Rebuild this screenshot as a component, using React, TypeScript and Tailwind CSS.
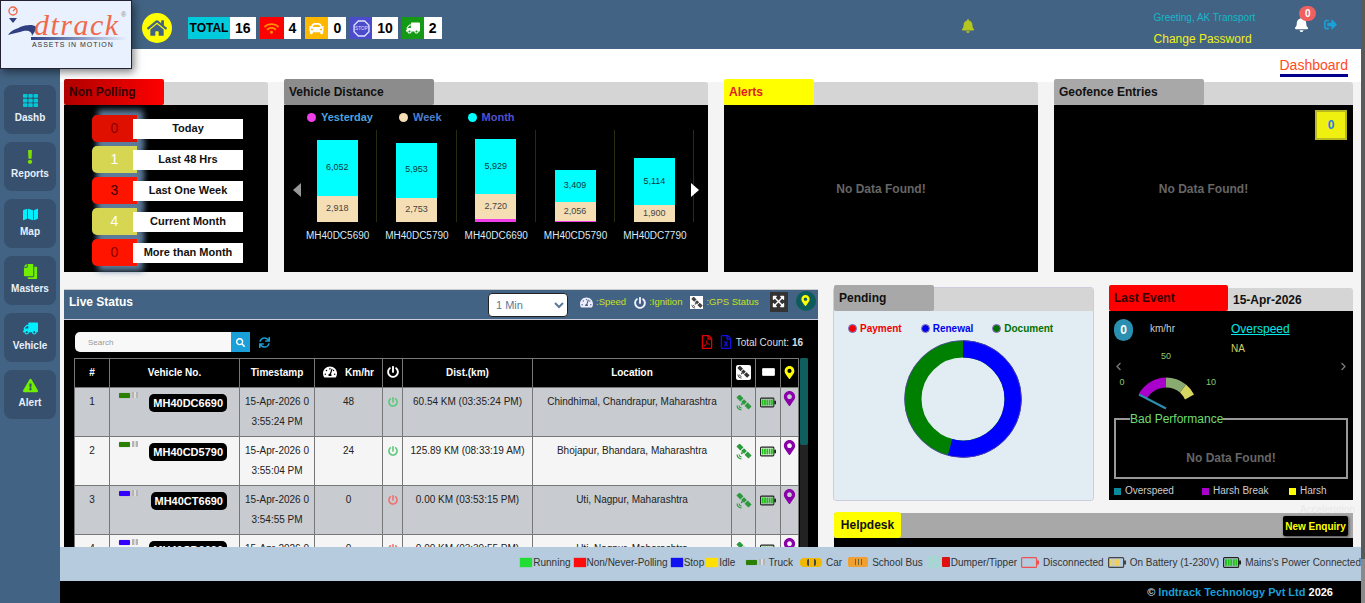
import type { ReactNode } from "react";
import {
  FaBell,
  FaCar,
  FaChevronLeft,
  FaChevronRight,
  FaCopy,
  FaExclamation,
  FaExclamationTriangle,
  FaExpandArrowsAlt,
  FaHome,
  FaMap,
  FaMapMarkerAlt,
  FaPowerOff,
  FaRegFileExcel,
  FaRegFilePdf,
  FaSearch,
  FaSignOutAlt,
  FaSync,
  FaTachometerAlt,
  FaTh,
  FaTruck,
  FaWifi,
} from "react-icons/fa";

const navItems = [
  { label: "Dashb", icon: <FaTh size={15} className="text-[#00c8d8]" /> },
  { label: "Reports", icon: <FaExclamation size={14} className="text-[#7fe000]" /> },
  { label: "Map", icon: <FaMap size={15} className="text-[#00f0ff]" /> },
  { label: "Masters", icon: <FaCopy size={15} className="text-[#70f000] -scale-x-100" /> },
  { label: "Vehicle", icon: <FaTruck size={15} className="text-[#00f0ff] -scale-x-100" /> },
  { label: "Alert", icon: <FaExclamationTriangle size={15} className="text-[#70f000]" /> },
];

const nonPolling = [
  { value: "0", label: "Today", pill: "bg-[#e01000] text-[#8a0000]" },
  { value: "1", label: "Last 48 Hrs", pill: "bg-[#d6d653] text-white" },
  { value: "3", label: "Last One Week", pill: "bg-[#ff1400] text-[#400000]" },
  { value: "4", label: "Current Month", pill: "bg-[#d6d653] text-white" },
  { value: "0", label: "More than Month", pill: "bg-[#ff1400] text-[#8a0000]" },
];

const bars = [
  { name: "MH40DC5690", month: "6,052", week: "2,918", mh: 56, wh: 26, yh: 0 },
  { name: "MH40DC5790", month: "5,953", week: "2,753", mh: 55, wh: 24.5, yh: 0 },
  { name: "MH40DC6690", month: "5,929", week: "2,720", mh: 55, wh: 25, yh: 3 },
  { name: "MH40CD5790", month: "3,409", week: "2,056", mh: 32, wh: 18.5, yh: 1.5 },
  { name: "MH40DC7790", month: "5,114", week: "1,900", mh: 47, wh: 17, yh: 0 },
];

const rows = [
  { no: 1, plate: "MH40DC6690", time: "3:55:24 PM", speed: "48", on: true, dist: "60.54 KM (03:35:24 PM)", loc: "Chindhimal, Chandrapur, Maharashtra", truck: "bg-[#2a8000]" },
  { no: 2, plate: "MH40CD5790", time: "3:55:04 PM", speed: "24", on: true, dist: "125.89 KM (08:33:19 AM)", loc: "Bhojapur, Bhandara, Maharashtra", truck: "bg-[#2a8000]" },
  { no: 3, plate: "MH40CT6690", time: "3:54:55 PM", speed: "0", on: false, dist: "0.00 KM (03:53:15 PM)", loc: "Uti, Nagpur, Maharashtra", truck: "bg-[#3300ff]" },
  { no: 4, plate: "MH40CD6690", time: "3:54:40 PM", speed: "0", on: false, dist: "0.00 KM (03:39:55 PM)", loc: "Uti, Nagpur, Maharashtra", truck: "bg-[#3300ff]" },
];

function SatelliteIcon({ size, color }: { size: number; color: string }) {
  return (
    <svg width={size} height={size} viewBox="0 0 16 16" className="mx-auto block">
      <g transform="rotate(45 8 7)" fill={color}>
        <rect x="-0.5" y="4.8" width="5.5" height="4.4" />
        <rect x="6" y="5" width="4" height="4" />
        <rect x="11" y="4.8" width="5.5" height="4.4" />
        <rect x="7.2" y="9" width="1.6" height="2" />
      </g>
      <path d="M1 10.5 A5 5 0 0 0 5.5 15 M3 10.5 A3 3 0 0 0 5.5 13" fill="none" stroke={color} strokeWidth="1.1" />
    </svg>
  );
}

function Counter({ box, value, children }: { box: string; value: string; children: ReactNode }) {
  return (
    <div className="flex h-[22px] items-stretch">
      <div className={`flex items-center justify-center ${box}`}>{children}</div>
      <div className="flex items-center justify-center bg-white px-[5px] text-[14px] font-bold text-black">{value}</div>
    </div>
  );
}

function Card({
  title,
  tabWidth,
  tabClass,
  extra,
  className,
  children,
}: {
  title: string;
  tabWidth: string;
  tabClass: string;
  extra?: ReactNode;
  className?: string;
  children: ReactNode;
}) {
  return (
    <div className={`flex flex-col rounded-[3px] ${className}`}>
      <div className="flex h-[23px] shrink-0 rounded-t-[3px] bg-[#d5d5d5]">
        <div className={`-mt-[3px] flex h-[26px] items-center rounded-[2px] pl-[5px] text-[12px] font-bold ${tabWidth} ${tabClass}`}>
          {title}
        </div>
        {extra}
      </div>
      {children}
    </div>
  );
}

function NoData() {
  return <div className="text-[12px] font-bold text-[#666]">No Data Found!</div>;
}

function MiniTruck({ color }: { color: string }) {
  return (
    <div className="flex items-center gap-[2px]">
      <div className={`h-[5px] w-[11px] rounded-[1px] shadow-[0_0_1px_#888] ${color}`} />
      <div className="h-[6px] w-[6px] border-x-2 border-[#b4b4b4] bg-[#dcdcdc]" />
    </div>
  );
}

function BatteryIcon({ stroke, fill, bars: n, w = 18 }: { stroke: string; fill: string; bars: number; w?: number }) {
  return (
    <svg width={w} height="11" viewBox="0 0 18 11">
      <rect x="0.6" y="0.6" width="15" height="9.8" rx="1" fill="none" stroke={stroke} strokeWidth="1.2" />
      <rect x="16" y="3.5" width="2" height="4" fill={stroke} />
      {Array.from({ length: n }).map((_, i) => (
        <rect key={i} x={2 + i * 2.6} y="2.2" width="2" height="6.6" fill={fill} />
      ))}
    </svg>
  );
}

function LiveTable() {
  const th = "border border-[#777] pb-[2px] text-[10px] font-bold text-white";
  const td = "border border-[#777] align-top text-[10px] leading-[20px] text-[#222] pt-[4px]";
  return (
    <table className="w-[724px] table-fixed border-collapse text-center">
      <colgroup>
        <col className="w-[35px]" />
        <col className="w-[130px]" />
        <col className="w-[75px]" />
        <col className="w-[68px]" />
        <col className="w-[20px]" />
        <col className="w-[130px]" />
        <col className="w-[199px]" />
        <col className="w-[24px]" />
        <col className="w-[25px]" />
        <col className="w-[18px]" />
      </colgroup>
      <thead>
        <tr className="h-[29px] bg-black">
          <th className={th}>#</th>
          <th className={th}>Vehicle No.</th>
          <th className={th}>Timestamp</th>
          <th className={th}>
            <span className="flex items-center justify-center gap-[8px]">
              <FaTachometerAlt size={14} />
              Km/hr
            </span>
          </th>
          <th className={th}>
            <FaPowerOff size={12} className="mx-auto" />
          </th>
          <th className={th}>Dist.(km)</th>
          <th className={th}>Location</th>
          <th className={th}>
            <span className="mx-auto flex h-[15px] w-[15px] items-center justify-center rounded-[2px] bg-white">
              <SatelliteIcon size={13} color="#333" />
            </span>
          </th>
          <th className={th}>
            <span className="mx-auto block h-[8px] w-[13px] rounded-[1px] border-[1.5px] border-[#ddd] bg-white" />
          </th>
          <th className={th}>
            <FaMapMarkerAlt size={13} className="mx-auto text-[#ffff00]" />
          </th>
        </tr>
      </thead>
      <tbody>
        {rows.map((r) => (
          <tr key={r.no} className={`h-[49px] ${r.no % 2 ? "bg-[#c8cbd0]" : "bg-[#f5f5f5]"}`}>
            <td className={td}>{r.no}</td>
            <td className={td}>
              <div className="flex items-start justify-between pl-[9px] pr-[12px]">
                <MiniTruck color={r.truck} />
                <span className="mt-[2px] rounded-[5px] bg-black px-[4px] text-[11px] font-bold leading-[18px] text-white">
                  {r.plate}
                </span>
              </div>
            </td>
            <td className={td}>
              15-Apr-2026 0
              <br />
              {r.time}
            </td>
            <td className={td}>{r.speed}</td>
            <td className={td}>
              <FaPowerOff size={10} className={`mx-auto mt-[5px] ${r.on ? "text-[#5cc87a]" : "text-[#f07070]"}`} />
            </td>
            <td className={td}>{r.dist}</td>
            <td className={td}>{r.loc}</td>
            <td className={td}>
              <div className="mt-[3px]">
                <SatelliteIcon size={16} color="#2a9a3c" />
              </div>
            </td>
            <td className={td}>
              <div className="mt-[5px] flex justify-center">
                <BatteryIcon stroke="#222" fill="#22c01a" bars={5} w={16} />
              </div>
            </td>
            <td className={td}>
              <FaMapMarkerAlt size={15} className="mx-auto -mt-[1px] text-[#8a00a8]" />
            </td>
          </tr>
        ))}
      </tbody>
    </table>
  );
}

export default function App() {
  return (
    <div className="flex h-[603px] w-[1365px] overflow-hidden font-['Liberation_Sans',Arial,sans-serif]">
      <div className="relative flex w-[1361px] flex-col">
        {/* logo sits over the header and sidebar */}
        <div className="absolute left-0 top-0 z-20 h-[69px] w-[132px] border border-[#223] bg-[#e8f1fd] shadow-[2px_3px_8px_rgba(0,0,0,0.5)]">
          <svg width="36" height="38" viewBox="0 0 36 38" className="absolute left-[5px] top-[4px]">
            <circle cx="7" cy="6" r="4" fill="none" stroke="#f0694a" strokeWidth="1.4" />
            <path d="M7 6 l3 -3" stroke="#f0694a" strokeWidth="1.2" />
            <path d="M3 13 h8 l-4 5 z" fill="#2f3f80" />
            <path d="M2 30 C6 24 12 24 14 22 C20 20 27 19 30 22 C30 26 27 29 26 31 C26 25 20 25 14 27 C10 28 5 29 2 30 Z" fill="#2f3f80" />
          </svg>
          <span className="absolute left-[33px] top-[8px] font-['Liberation_Serif',serif] text-[30px] italic leading-[32px] tracking-[1.5px] text-[#f0694a]">
            dtrack
          </span>
          <span className="absolute left-[120px] top-[10px] text-[7px] leading-[8px] text-[#888]">®</span>
          <div className="absolute left-[30px] top-[36px] h-[3px] w-[96px] bg-gradient-to-r from-[#2f3f80] to-[#e8f1fd]" />
          <span className="absolute left-[31px] top-[40px] whitespace-nowrap text-[7px] leading-[8px] tracking-[0.95px] text-[#333]">
            ASSETS IN MOTION
          </span>
        </div>

        <header className="flex h-[49px] shrink-0 items-center bg-[#426383] pl-[142px]">
          <div className="mt-[7px] flex h-[30px] w-[30px] items-center justify-center rounded-full bg-[#ffff00]">
            <FaHome size={20} className="text-[#426383]" />
          </div>
          <div className="mt-[7px] ml-[16px] flex items-center gap-[4px]">
            <Counter box="w-[42px] bg-[#00cbdc] text-[12px] font-bold text-black" value="16">
              TOTAL
            </Counter>
            <Counter box="w-[24px] bg-[#ff0000]" value="4">
              <FaWifi size={15} className="text-[#ff9000]" />
            </Counter>
            <Counter box="w-[23px] bg-[#ffb800]" value="0">
              <FaCar size={15} className="text-white" />
            </Counter>
            <Counter box="w-[22px] bg-[#4a4ccc]" value="10">
              <svg width="17" height="17" viewBox="0 0 16 16">
                <polygon points="5,1 11,1 15,5 15,11 11,15 5,15 1,11 1,5" fill="none" stroke="#dfe0ff" strokeWidth="1.3" />
                <text x="8" y="9.5" fontSize="4.5" fill="#dfe0ff" textAnchor="middle">STOP</text>
              </svg>
            </Counter>
            <Counter box="w-[22px] bg-[#159a15]" value="2">
              <FaTruck size={14} className="text-white -scale-x-100" />
            </Counter>
          </div>
          <div className="mt-[2px] ml-[519px] text-[#b5c61e]">
            <FaBell size={14} />
          </div>
          <div className="ml-[179px] flex flex-col pt-[8px]">
            <span className="text-[10px] leading-[14px] text-[#14b8c8]">Greeting, AK Transport</span>
            <span className="mt-[7px] text-[12px] leading-[14px] text-[#f0f020]">Change Password</span>
          </div>
          <div className="relative ml-[39px] text-white">
            <FaBell size={15} />
            <span className="absolute -right-[7px] -top-[11px] flex h-[15px] w-[17px] items-center justify-center rounded-full bg-[#f06060] text-[10px] font-bold text-white">
              0
            </span>
          </div>
          <FaSignOutAlt size={13} className="ml-[15px] text-[#1a9fd8]" />
        </header>

        <div className="flex min-h-0 flex-1">
          <aside className="flex w-[60px] shrink-0 flex-col gap-[8px] bg-[#426383] px-[4px] pt-[36px]">
            {navItems.map((n) => (
              <div
                key={n.label}
                className="flex h-[49px] flex-col items-center justify-center gap-[2px] rounded-lg bg-[#36506e] pb-[2px] text-[10px] font-bold text-[#e8f0fa]"
              >
                {n.icon}
                {n.label}
              </div>
            ))}
          </aside>

          <div className="flex min-w-0 flex-1 flex-col">
            <main className="relative min-h-0 flex-1 overflow-hidden bg-[#f4f4f4] pl-[4px] pr-[8px]">
              <div className="-ml-[4px] -mr-[8px] flex h-[33px] justify-end bg-white pr-[13px]">
                <span className="h-[28px] border-b-[3px] border-[#00008b] pt-[8px] text-[14px] leading-[16px] text-[#ff4a1c]">
                  Dashboard
                </span>
              </div>

              <div className="flex h-[190px] gap-4">
                <Card title="Non Polling" tabWidth="w-[100px]" tabClass="bg-gradient-to-r from-[#b00000] to-[#ff0000] text-[#300]" className="w-[204px]">
                  <div className="isolate flex flex-1 flex-col gap-[4px] bg-black pl-[28px] pt-[10px]">
                    {nonPolling.map((p, i) => (
                      <div key={i} className="flex h-[27px] items-center">
                        <div className={`relative flex h-[27px] w-[45px] items-center justify-center rounded-l-[5px] text-[14px] ${p.pill}`}>
                          <span className="absolute -bottom-[5px] -right-[6px] -top-[5px] left-[6px] -z-10 bg-[#5f7f9f] blur-[3px]" />
                          {p.value}
                        </div>
                        <div className="relative -ml-[4px] flex h-[20px] w-[110px] items-center justify-center bg-white text-[11px] font-bold text-[#111]">
                          {p.label}
                        </div>
                      </div>
                    ))}
                  </div>
                </Card>

                <Card title="Vehicle Distance" tabWidth="w-[150px]" tabClass="bg-[#8c8c8c] text-[#111]" className="w-[424px]">
                  <div className="relative flex flex-1 flex-col bg-black">
                    <div className="mb-px flex h-[24px] items-center pl-[23px] text-[11px] font-bold">
                      <span className="mr-[5px] h-[9px] w-[9px] rounded-full bg-[#f03ee8]" />
                      <span className="mr-[26px] text-[#4aa3df]">Yesterday</span>
                      <span className="mr-[5px] h-[9px] w-[9px] rounded-full bg-[#f5deb3]" />
                      <span className="mr-[26px] text-[#4a7fd0]">Week</span>
                      <span className="mr-[5px] h-[9px] w-[9px] rounded-full bg-[#00ffff]" />
                      <span className="text-[#5050d0]">Month</span>
                    </div>
                    <div className="flex pl-[14px]">
                      {bars.map((b) => (
                        <div key={b.name} className="flex w-[79.3px] flex-col">
                          <div className="flex h-[92px] flex-col items-center justify-end border-r border-[#2b2b10]">
                            <div className="flex w-[41px] items-center justify-center bg-[#00ffff] text-[9px] text-[#0a3a3a]" style={{ height: b.mh }}>
                              {b.month}
                            </div>
                            <div className="flex w-[41px] items-center justify-center bg-[#f5deb3] text-[9px] text-[#444]" style={{ height: b.wh }}>
                              {b.week}
                            </div>
                            <div className="w-[41px] bg-[#f03ee8]" style={{ height: b.yh }} />
                          </div>
                          <div className="mt-[7px] text-center text-[10px] leading-[14px] text-[#d9e8f7]">{b.name}</div>
                        </div>
                      ))}
                    </div>
                    <span className="absolute left-[9px] top-[78px] h-0 w-0 border-y-[7px] border-r-[8px] border-y-transparent border-r-[#999]" />
                    <span className="absolute left-[407px] top-[78px] h-0 w-0 border-y-[7px] border-l-[8px] border-y-transparent border-l-white" />
                  </div>
                </Card>

                <Card title="Alerts" tabWidth="w-[90px]" tabClass="bg-[#ffff00] text-[#e02020]" className="w-[314px]">
                  <div className="flex flex-1 items-center justify-center bg-black">
                    <NoData />
                  </div>
                </Card>

                <Card title="Geofence Entries" tabWidth="w-[150px]" tabClass="bg-[#a8a8a8] text-[#111]" className="w-[299px]">
                  <div className="relative flex flex-1 items-center justify-center bg-black">
                    <NoData />
                    <span className="absolute right-[6px] top-[5px] flex h-[30px] w-[32px] items-center justify-center border-2 border-[#b8b820] bg-[#f0f010] text-[12px] font-bold text-[#1a7fe0]">
                      0
                    </span>
                  </div>
                </Card>
              </div>

              <div className="mt-[17px] flex items-start gap-4">
                <section className="flex h-[300px] w-[754px] shrink-0 flex-col border-t border-[#ccc]">
                  <div className="flex h-[30px] shrink-0 items-center border-b border-[#ccd] bg-[#426383] pl-[5px] text-white">
                    <span className="-mt-[6px] text-[12px] font-bold">Live Status</span>
                    <select className="ml-[355px] h-[24px] w-[80px] rounded-[4px] border border-[#222] bg-white pl-[3px] text-[11px] text-[#5b7a9a]">
                      <option>1 Min</option>
                    </select>
                    <div className="-mt-[4px] flex items-center">
                      <FaTachometerAlt size={13} className="ml-[12px] text-[#eef]" />
                      <span className="ml-[3px] text-[9.5px] text-[#c8e020]">:Speed</span>
                      <FaPowerOff size={12} className="ml-[8px] text-[#eef]" />
                      <span className="ml-[3px] text-[9.5px] text-[#c8e020]">:Ignition</span>
                      <span className="ml-[8px] flex h-[13px] w-[13px] items-center justify-center bg-white">
                        <SatelliteIcon size={12} color="#444" />
                      </span>
                      <span className="ml-[3px] text-[9.5px] text-[#c8e020]">:GPS Status</span>
                    </div>
                    <span className="-mt-[6px] ml-[11px] flex h-[20px] w-[18px] items-center justify-center bg-[#333]">
                      <FaExpandArrowsAlt size={13} className="text-white" />
                    </span>
                    <span className="-mt-[8px] ml-[8px] flex h-[20px] w-[20px] items-center justify-center rounded-full bg-[#0d5c5c]">
                      <FaMapMarkerAlt size={11} className="text-[#ffff00]" />
                    </span>
                  </div>
                  <div className="flex flex-1 flex-col bg-black pl-[10px] pt-[12px]">
                    <div className="flex h-[20px] items-center pr-[15px]">
                      <input
                        placeholder="Search"
                        className="ml-px h-[20px] w-[156px] rounded-l-[5px] bg-[#f8f8f8] pl-[13px] text-[8px] placeholder:text-[#999]"
                      />
                      <span className="flex h-[20px] w-[19px] items-center justify-center bg-[#1a9fd8]">
                        <FaSearch size={9} className="text-white" />
                      </span>
                      <FaSync size={11} className="ml-[9px] text-[#1a9fd8]" />
                      <FaRegFilePdf size={14} className="ml-auto text-[#e00000]" />
                      <FaRegFileExcel size={14} className="ml-[5px] text-[#1010e0]" />
                      <span className="ml-[3px] text-[10px] text-[#ddd]">
                        Total Count: <b>16</b>
                      </span>
                    </div>
                    <div className="mt-[6px] flex">
                      <LiveTable />
                      <div className="ml-px h-[200px] w-[8px] bg-[#222]">
                        <div className="h-[87px] rounded-[2px] bg-[#0f5f5f]" />
                      </div>
                    </div>
                  </div>
                </section>

                <div className="-mt-px flex w-[519px] shrink-0 flex-col">
                  <div className="flex h-[212px] gap-4">
                    <Card title="Pending" tabWidth="w-[100px]" tabClass="bg-[#a8a8a8] text-[#111]" className="w-[259px] shadow-[0_0_0_1px_#ccd]">
                      <div className="flex flex-1 flex-col rounded-b-[3px] bg-[#e2ecf3]">
                        <div className="flex h-[34px] items-center pl-[15px] pt-[1px] text-[10px] font-bold">
                          <span className="mr-[4px] h-[7px] w-[7px] rounded-full bg-[#f00000] outline outline-1 outline-[#6a50b0]" />
                          <span className="mr-[20px] text-[#f00000]">Payment</span>
                          <span className="mr-[4px] h-[7px] w-[7px] rounded-full bg-[#0000f0] outline outline-1 outline-[#6a50b0]" />
                          <span className="mr-[20px] text-[#0000f0]">Renewal</span>
                          <span className="mr-[4px] h-[7px] w-[7px] rounded-full bg-[#007000] outline outline-1 outline-[#6a50b0]" />
                          <span className="text-[#007000]">Document</span>
                        </div>
                        <svg width="118" height="118" viewBox="0 0 118 118" className="-mt-[5px] ml-[70px]">
                          <circle cx="59" cy="59" r="50" fill="none" stroke="#008000" strokeWidth="17" />
                          <path d="M59 9 A50 50 0 1 1 46.06 107.3" fill="none" stroke="#0000ff" strokeWidth="17" />
                          <circle cx="59" cy="59" r="58.4" fill="none" stroke="#5a3fb0" strokeWidth="0.8" />
                        </svg>
                      </div>
                    </Card>

                    <Card
                      title="Last Event"
                      tabWidth="w-[119px]"
                      tabClass="bg-[#ff0000] text-[#300]"
                      className="w-[244px]"
                      extra={<span className="ml-[5px] self-center text-[12px] font-bold text-[#111]">15-Apr-2026</span>}
                    >
                      <div className="relative flex flex-1 flex-col bg-black px-[5px] pt-[8px]">
                        <div className="flex">
                          <span className="flex h-[22px] w-[19px] items-center justify-center rounded-full bg-[#2a8fb0] text-[12px] font-bold text-white">
                            0
                          </span>
                          <span className="ml-[17px] mt-[3px] text-[10px] leading-[14px] text-[#ccc]">km/hr</span>
                          <div className="ml-[56px] flex flex-col">
                            <span className="mt-[2px] text-[12px] leading-[16px] text-[#00e8e8] underline">Overspeed</span>
                            <span className="mt-[5px] text-[10px] leading-[14px] text-[#d0d060]">NA</span>
                          </div>
                        </div>
                        <div className="relative h-[56px]">
                          <svg width="120" height="64" viewBox="0 0 120 64" className="absolute -top-[7px] left-[0px]">
                            <text x="52" y="10" fontSize="9" fill="#8fc870" textAnchor="middle">50</text>
                            <text x="8" y="36" fontSize="9" fill="#8fc870" textAnchor="middle">0</text>
                            <text x="97" y="36" fontSize="9" fill="#8fc870" textAnchor="middle">10</text>
                            <g transform="translate(0 -2.5)">
                              <path d="M25 47 A32 32 0 0 1 52 31 L52 41 A22 22 0 0 0 33 52 Z" fill="#aa00cc" />
                              <path d="M52 31 A32 32 0 0 1 72 38 L66 46 A22 22 0 0 0 52 41 Z" fill="#8aab70" />
                              <path d="M72 38 A32 32 0 0 1 80 48 L71 53 A22 22 0 0 0 66 46 Z" fill="#d6d660" />
                              <path d="M25 48 L52 62" stroke="#2a8fb0" strokeWidth="2" />
                            </g>
                          </svg>
                          <FaChevronLeft size={9} className="absolute left-0 top-[6px] text-[#777]" />
                          <FaChevronRight size={9} className="absolute right-0 top-[6px] text-[#777]" />
                        </div>
                        <fieldset className="h-[67px] border-2 border-[#999] px-[14px]">
                          <legend className="px-0 text-[12px] leading-[14px] text-[#6fdc6f]">Bad Performance</legend>
                          <div className="mt-[23px] text-center">
                            <NoData />
                          </div>
                        </fieldset>
                        <div className="mt-[6px] flex items-center text-[10px] leading-[12px] text-[#ccc]">
                          <span className="mr-[4px] h-[7px] w-[7px] bg-[#0a8a9a]" />
                          <span className="w-[77px]">Overspeed</span>
                          <span className="mr-[4px] h-[7px] w-[7px] bg-[#aa00cc]" />
                          <span className="w-[76px]">Harsh Break</span>
                          <span className="mr-[4px] h-[7px] w-[7px] bg-[#ffff00]" />
                          <span>Harsh</span>
                        </div>
                        <span className="absolute -bottom-[16px] right-[-2px] text-[10px] leading-[12px] text-[#e8e8e8]">Acceleration</span>
                      </div>
                    </Card>
                  </div>

                  <div className="mt-[13px] flex flex-col">
                    <div className="flex h-[25px] items-start bg-[#a8a8a8]">
                      <div className="-mt-[1px] flex h-[26px] w-[67px] items-center justify-center rounded-[3px] bg-[#ffff00] text-[12px] font-bold text-[#111]">
                        Helpdesk
                      </div>
                      <span className="ml-auto mr-[5px] mt-[3px] flex h-[20px] w-[65px] items-center justify-center rounded-[2px] bg-black text-[10px] font-bold text-[#ffff00] shadow-[1px_1px_3px_#444]">
                        New Enquiry
                      </span>
                    </div>
                    <div className="h-[20px] bg-black" />
                  </div>
                </div>
              </div>
            </main>

            <div className="relative z-10 flex h-[34px] shrink-0 items-center justify-end whitespace-nowrap bg-[#b6cbdd] pb-[4px] text-[10px] text-[#333]">
              <span className="mr-px h-[9px] w-[12px] bg-[#22dd33] shadow-[0_0_1px_#22dd33]" />
              <span className="mr-[3px]">Running</span>
              <span className="mr-px h-[9px] w-[12px] bg-[#ff0d0d] shadow-[0_0_1px_#ff0d0d]" />
              <span className="mr-[3px]">Non/Never-Polling</span>
              <span className="mr-px h-[9px] w-[12px] bg-[#1010f0] shadow-[0_0_1px_#1010f0]" />
              <span className="mr-[2px]">Stop</span>
              <span className="mr-px h-[9px] w-[12px] bg-[#ffe000] shadow-[0_0_1px_#ffe000]" />
              <span className="mr-[11px]">Idle</span>
              <MiniTruck color="bg-[#2a8000]" />
              <span className="ml-[3px] mr-[7px]">Truck</span>
              <span className="mr-[4px] flex h-[9px] w-[22px] items-center justify-center rounded-[4px] bg-[#f0b800]">
                <span className="h-[7px] w-[9px] rounded-[2px] border-x-2 border-[#444]" />
              </span>
              <span className="mr-[6px]">Car</span>
              <span className="mr-[4px] flex h-[10px] w-[20px] items-center justify-center gap-[2px] rounded-[2px] bg-[#f0a030]">
                <span className="h-[6px] w-[1px] bg-[#664]" />
                <span className="h-[6px] w-[1px] bg-[#664]" />
                <span className="h-[6px] w-[1px] bg-[#664]" />
              </span>
              <span className="mr-[5px]">School Bus</span>
              <span className="flex h-[12px] items-center">
                <span className="h-[12px] w-[14px] bg-[#a8d4d4]" />
                <span className="h-[10px] w-[8px] rounded-[1px] bg-[#e01010]" />
              </span>
              <span className="ml-px mr-[4px]">Dumper/Tipper</span>
              <BatteryIcon stroke="#f05050" fill="#f05050" bars={0} />
              <span className="ml-[4px] mr-[4px]">Disconnected</span>
              <BatteryIcon stroke="#444" fill="#f0d060" bars={4} />
              <span className="ml-[4px] mr-[4px]">On Battery (1-230V)</span>
              <BatteryIcon stroke="#222" fill="#22c01a" bars={5} />
              <span className="ml-[4px]">Mains's Power Connected</span>
            </div>

            <footer className="flex h-[22px] shrink-0 items-center justify-end bg-black pr-[28px] text-[11px] font-bold">
              <span className="text-[#bcd8f0]">©&nbsp;</span>
              <span className="text-[#1a9fd8]">Indtrack Technology Pvt Ltd&nbsp;</span>
              <span className="text-white">2026</span>
            </footer>
          </div>
        </div>
      </div>
      <div className="flex w-[4px] flex-col bg-[#5a5a5a]">
        <div className="mt-auto h-[44px] bg-[#8a8a8a]" />
      </div>
    </div>
  );
}
